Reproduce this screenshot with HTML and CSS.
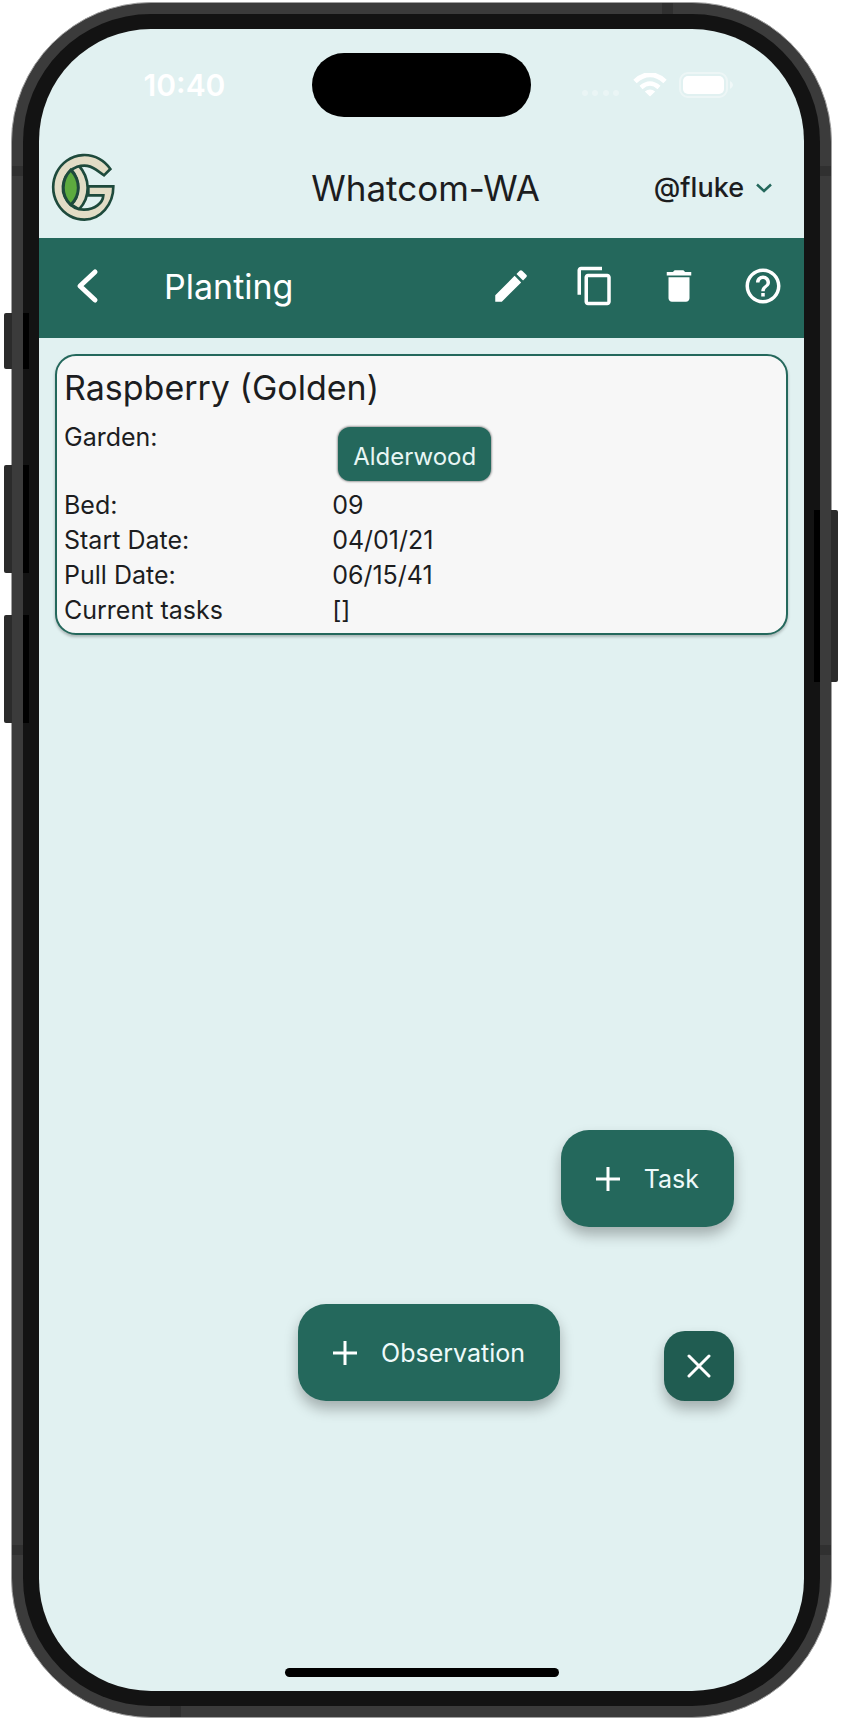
FILE: index.html
```html
<!DOCTYPE html>
<html lang="en">
<head>
<meta charset="utf-8">
<meta name="viewport" content="width=device-width, initial-scale=1">
<title>Planting</title>
<link rel="stylesheet" href="styles.css">
</head>
<body>
<div class="phone">
  <span class="key key-action"></span>
  <span class="key key-up"></span>
  <span class="key key-down"></span>
  <span class="key key-power"></span>
  <span class="band band-top"></span>
  <span class="band band-bottom"></span>
  <span class="band band-left-high"></span>
  <span class="band band-left-low"></span>
  <span class="band band-right-high"></span>
  <span class="band band-right-low"></span>
  <div class="bezel">
    <div class="screen">
      <div class="status">
        <span class="time">10:40</span>
        <span class="island"></span>
        <span class="signals">
          <svg width="40" height="24" viewBox="0 0 40 24" fill="#fff" fill-opacity=".3" aria-hidden="true"><circle cx="4" cy="20" r="3"/><circle cx="14" cy="20" r="3"/><circle cx="25" cy="20" r="3"/><circle cx="35" cy="20" r="3"/></svg>
          <svg width="34" height="24" viewBox="0 0 34 24" fill="none" stroke="#fff" aria-hidden="true"><path d="M2 8.500Q17-5 32 8.500" stroke-width="5"/><path d="M8 14.500Q17 6.500 26 14.500" stroke-width="4.500"/><path d="M17 23.500L11.800 18.500Q17 14.500 22.200 18.500Z" fill="#fff" stroke="none"/></svg>
          <svg width="54" height="26" viewBox="0 0 54 26" aria-hidden="true"><rect x="1" y="1" width="47" height="24" rx="8" fill="none" stroke="#fff" stroke-opacity=".4" stroke-width="2"/><rect x="4" y="4" width="41" height="18" rx="5" fill="#fff"/><path d="M51 9q3 1.500 3 4t-3 4z" fill="#fff" fill-opacity=".5"/></svg>
        </span>
      </div>
      <header class="header">
        <svg class="logo" viewBox="31 23 195 207" role="img" aria-label="Home" stroke="#1e4a3c" stroke-width="8">
          <path d="M92 73L113 59C150 100 150 155 115 192L92 178C120 150 120 105 92 73Z" fill="#e2dcc5"/>
          <path d="M209 71A94 97 0 1 0 131 223A87 99 0 0 0 218 123H143V150H188A58 45 0 0 1 131 193A63 66 0 1 1 166 73L190 90Z" fill="#e2dcc5"/>
          <path d="M90 74C120 105 120 150 90 178C61 150 61 105 90 74Z" fill="#5dab3f"/>
        </svg>
        <h1 class="title">Whatcom-WA</h1>
        <button class="user" type="button">@fluke
          <svg width="16" height="10" viewBox="0 0 16 10" fill="none" stroke="#24685c" stroke-width="2.500" aria-hidden="true"><path d="M1 1.500L8 8L15 1.500"/></svg>
        </button>
      </header>
      <nav class="toolbar">
        <button class="icon" type="button" aria-label="Back"><svg viewBox="0 0 42 42" fill="none" stroke="#fff" stroke-width="5" stroke-linecap="round" stroke-linejoin="round"><path d="M28 7L13 21L28 35" /></svg></button>
        <h2 class="section">Planting</h2>
        <button class="icon" type="button" aria-label="Edit"><svg viewBox="0 0 24 24"><path d="M3 17.250V21h3.750L17.810 9.940l-3.750-3.750L3 17.250zM20.710 7.040a1 1 0 0 0 0-1.410l-2.340-2.340a1 1 0 0 0-1.410 0l-1.830 1.830 3.750 3.750 1.830-1.830z"/></svg></button>
        <button class="icon" type="button" aria-label="Copy"><svg viewBox="0 0 24 24"><path d="M16 1H4c-1.100 0-2 .9-2 2v14h2V3h12V1zm3 4H8c-1.100 0-2 .9-2 2v14c0 1.100.9 2 2 2h11c1.100 0 2-.9 2-2V7c0-1.100-.9-2-2-2zm0 16H8V7h11v14z"/></svg></button>
        <button class="icon" type="button" aria-label="Delete"><svg viewBox="0 0 24 24"><path d="M6 19c0 1.100.9 2 2 2h8c1.100 0 2-.9 2-2V7H6v12zM19 4h-3.500l-1-1h-5l-1 1H5v2h14V4z"/></svg></button>
        <button class="icon" type="button" aria-label="Help"><svg viewBox="0 0 24 24"><path d="M11 18h2v-2h-2v2zm1-16C6.480 2 2 6.480 2 12s4.480 10 10 10 10-4.480 10-10S17.520 2 12 2zm0 18c-4.410 0-8-3.590-8-8s3.590-8 8-8 8 3.590 8 8-3.590 8-8 8zm0-14c-2.210 0-4 1.790-4 4h2c0-1.100.9-2 2-2s2 .9 2 2c0 2-3 1.750-3 5h2c0-2.250 3-2.500 3-5 0-2.210-1.790-4-4-4z"/></svg></button>
      </nav>
      <main class="content">
        <section class="card">
          <h3 class="name">Raspberry (Golden)</h3>
          <dl class="facts">
            <dt>Garden:</dt><dd><a class="chip" href="#garden">Alderwood</a></dd>
            <dt>Bed:</dt><dd>09</dd>
            <dt>Start Date:</dt><dd>04/01/21</dd>
            <dt>Pull Date:</dt><dd>06/15/41</dd>
            <dt>Current tasks</dt><dd>[]</dd>
          </dl>
        </section>
        <div class="actions">
          <button class="fab" type="button"><svg width="24" height="24" viewBox="0 0 24 24" stroke="#fff" stroke-width="3" aria-hidden="true"><path d="M12 0V24M0 12H24"/></svg>Task</button>
          <div class="actions-row">
            <button class="fab" type="button"><svg width="24" height="24" viewBox="0 0 24 24" stroke="#fff" stroke-width="3" aria-hidden="true"><path d="M12 0V24M0 12H24"/></svg>Observation</button>
            <button class="close" type="button" aria-label="Close"><svg width="24" height="24" viewBox="0 0 24 24" stroke="#fff" stroke-width="3" stroke-linecap="round" aria-hidden="true"><path d="M2 2L22 22M22 2L2 22"/></svg></button>
          </div>
        </div>
      </main>
      <div class="home"></div>
    </div>
  </div>
</div>
</body>
</html>
```
FILE: styles.css
```css
* { box-sizing: border-box; }
body {
  margin: 0;
  min-height: 100vh;
  display: flex;
  padding: 2px 18px 2px 11px;
  background: #fff;
  color: #1c1d1f;
  font-family: Inter, "Liberation Sans", sans-serif;
}
h1, h2, h3, dl, dd { margin: 0; font-weight: 400; }
button { border: 0; padding: 0; background: none; color: inherit; font: inherit; cursor: pointer; }
svg { display: block; flex: none; }

.phone {
  position: relative;
  flex: 1;
  display: flex;
  padding: 11px;
  border: 1px solid #a0a0a0;
  border-radius: 140px;
  background: #3b3b3b;
}
.bezel {
  flex: 1;
  display: flex;
  padding: 15px 16px;
  border-radius: 128px;
  background: #131313;
}
.screen {
  flex: 1;
  display: flex;
  flex-direction: column;
  overflow: hidden;
  border-radius: 112px;
  background: #e1f1f1;
}

/* hardware keys, each with the dark slot it casts on the bezel */
.key { position: absolute; left: -8px; width: 8px; background: #2b2b2b; border-radius: 2px 0 0 2px; }
.key::after { content: ""; position: absolute; top: 0; bottom: 0; left: 19px; width: 6px; background: #000; }
.key-action { top: 310px; height: 56px; }
.key-up { top: 462px; height: 108px; }
.key-down { top: 612px; height: 108px; }
.key-power { left: auto; right: -7px; top: 507px; height: 172px; width: 7px; border-radius: 0 2px 2px 0; }
.key-power::after { left: auto; right: 18px; }

.band { position: absolute; background: #303030; }
.band-top, .band-bottom { width: 11px; height: 11px; }
.band-top { top: 0; right: 158px; }
.band-bottom { bottom: 0; left: 158px; }
.band-left-high, .band-left-low { left: 0; width: 11px; height: 10px; }
.band-right-high, .band-right-low { right: 0; width: 11px; height: 10px; }
.band-left-high, .band-right-high { top: 163px; }
.band-left-low, .band-right-low { bottom: 162px; }

.status {
  display: grid;
  grid-template-columns: 1fr 219px 1fr;
  align-items: center;
  padding-top: 24px;
  color: #fff;
}
.time { padding-left: 18px; text-align: center; font-size: 30px; font-weight: 600; }
.island { height: 64px; border-radius: 32px; background: #000; }
.signals { display: flex; align-items: center; gap: 12px; padding-left: 50px; }

.header {
  display: grid;
  grid-template-columns: 1fr auto 1fr;
  align-items: center;
  height: 121px;
  padding: 20px 4px 0 12px;
}
.logo { width: 65px; height: 69px; }
.title { font-size: 35px; line-height: 44px; }
.user {
  display: flex;
  align-items: center;
  justify-self: end;
  gap: 12px;
  padding-right: 28px;
  font-size: 27px;
  font-weight: 500;
}

.toolbar {
  display: flex;
  align-items: center;
  gap: 42px;
  min-height: 100px;
  padding: 0 20px 4px 28px;
  background: #24685c;
  color: #fff;
}
.icon { width: 42px; height: 42px; flex: none; }
.icon svg { width: 42px; height: 42px; fill: #fff; }
.icon svg[fill="none"] { fill: none; }
.section { flex: 1; padding: 2px 0 0 13px; font-size: 34px; line-height: 44px; }

.content { flex: 1; display: flex; flex-direction: column; padding: 16px; }
.card {
  padding: 10px 7px 5px;
  border: 2px solid #24685c;
  border-radius: 21px;
  background: #f7f7f7;
  box-shadow: 0 2px 3px rgba(0, 0, 0, .25);
}
.name { font-size: 34px; line-height: 44px; }
.facts {
  display: grid;
  grid-template-columns: 3fr 5fr;
  margin-top: 10px;
  font-size: 25px;
  line-height: 35px;
}
.chip {
  display: inline-block;
  margin: 7px 6px;
  padding: 12px 15px 7px;
  border-radius: 12px;
  background: #24685c;
  box-shadow: 0 0 2px 1px rgba(0, 0, 0, .35);
  color: #e8f6f4;
  font-size: 24px;
  text-decoration: none;
  vertical-align: top;
}

.actions {
  display: flex;
  flex-direction: column;
  align-items: flex-end;
  gap: 77px;
  margin-top: auto;
  padding: 32px 54px 251px 0;
}
.actions-row { display: flex; align-items: flex-end; gap: 104px; }
.fab, .close { background: #24685c; box-shadow: 0 8px 14px rgba(0, 0, 0, .28); color: #eefafa; }
.fab {
  display: flex;
  align-items: center;
  gap: 24px;
  min-height: 97px;
  padding: 0 35px;
  border-radius: 28px;
  font-size: 25px;
}
.close { display: grid; place-items: center; width: 70px; height: 70px; border-radius: 21px; background: #205c51; }

.home { width: 274px; height: 9px; margin: 0 auto 14px; border-radius: 5px; background: #000; }
```
